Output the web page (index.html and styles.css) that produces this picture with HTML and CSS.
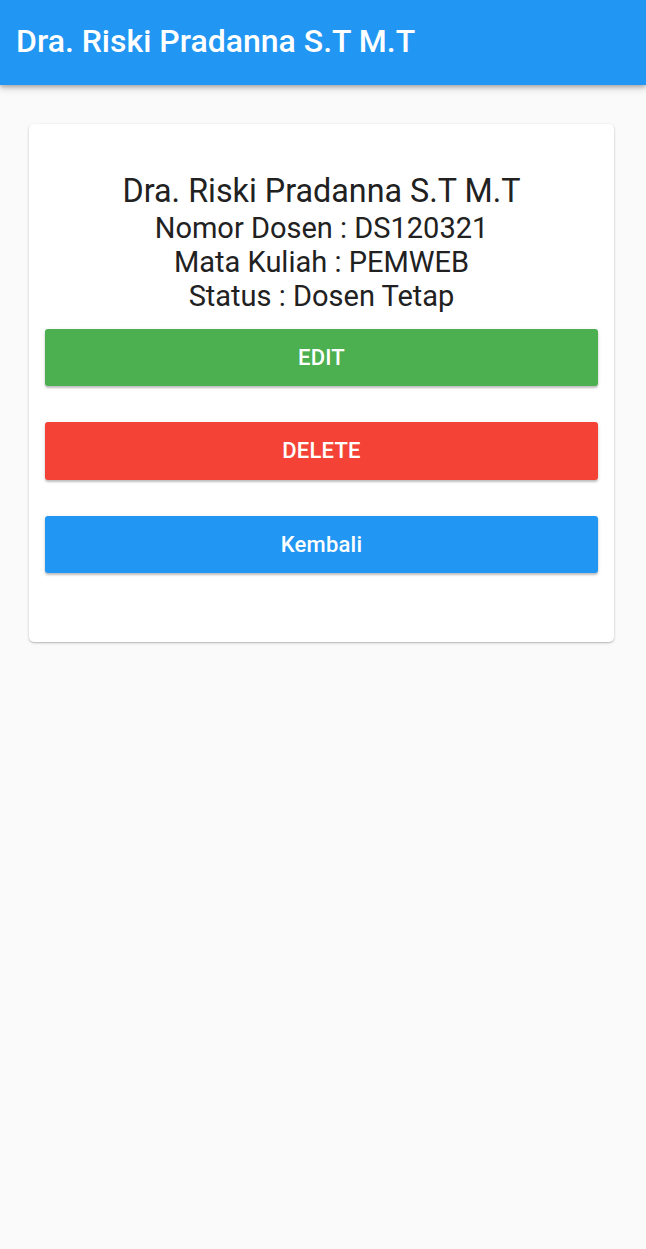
FILE: index.html
```html
<!DOCTYPE html>
<html>
<head>
<meta charset="utf-8">
<link rel="stylesheet" href="styles.css">
</head>
<body>
<header class="appbar">
  <h1 class="appbar-title">Dra. Riski Pradanna S.T M.T</h1>
</header>
<main class="content">
  <section class="card">
    <div class="info">
      <div class="info-name">Dra. Riski Pradanna S.T M.T</div>
      <div class="info-line">Nomor Dosen : DS120321</div>
      <div class="info-line">Mata Kuliah : PEMWEB</div>
      <div class="info-line">Status : Dosen Tetap</div>
    </div>
    <div class="actions">
      <button class="btn btn-edit">EDIT</button>
      <button class="btn btn-delete">DELETE</button>
      <button class="btn btn-back">Kembali</button>
    </div>
  </section>
</main>
</body>
</html>
```
FILE: styles.css
```css
html, body {
  margin: 0;
  padding: 0;
}
body {
  background: #fafafa;
  font-family: Roboto, "Noto Sans", sans-serif;
  width: 646px;
  height: 1249px;
  overflow: hidden;
}
.appbar {
  height: 85px;
  background: #2196f3;
  box-shadow: 0 2px 4px rgba(0,0,0,0.25), 0 4px 8px rgba(0,0,0,0.12);
  display: flex;
  align-items: center;
  padding: 0 16px;
  box-sizing: border-box;
  position: relative;
  z-index: 1;
}
.appbar-title {
  margin: 0;
  margin-top: -4px;
  color: #fff;
  font-size: 32px;
  line-height: 38px;
  font-weight: 500;
  white-space: nowrap;
}
.content {
  padding: 39px 32px 0 29px;
}
.card {
  background: #fff;
  border-radius: 5px;
  box-shadow: 0 1px 3px rgba(0,0,0,0.2), 0 1px 1px rgba(0,0,0,0.1);
  padding: 49px 16px 69px 16px;
}
.info {
  text-align: center;
  color: #212121;
}
.info-name {
  font-size: 32.3px;
  line-height: 37.5px;
}
.info-line {
  font-size: 29px;
  line-height: 34px;
}
.actions {
  display: flex;
  flex-direction: column;
  gap: 36px;
  margin-top: 16px;
}
.btn {
  height: 57.5px;
  border: none;
  border-radius: 3px;
  color: #fff;
  font-family: Roboto, "Noto Sans", sans-serif;
  font-size: 22px;
  font-weight: 500;
  letter-spacing: 0.2px;
  box-shadow: 0 2px 2px rgba(0,0,0,0.2), 0 1px 4px rgba(0,0,0,0.1);
}
.btn-edit { background: #4caf50; }
.btn-delete { background: #f44336; }
.btn-back { background: #2196f3; }
```
